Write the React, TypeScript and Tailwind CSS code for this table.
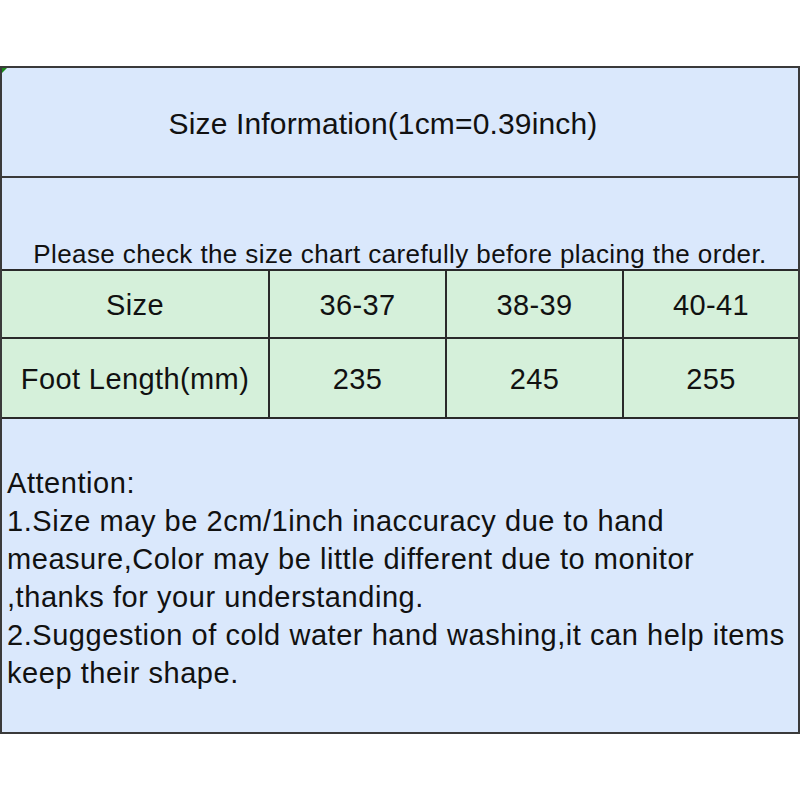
import React from 'react'

const sizes = ['36-37', '38-39', '40-41']
const lengths = ['235', '245', '255']

const notes = [
  'Attention:',
  '1.Size may be 2cm/1inch inaccuracy due to hand',
  'measure,Color may be little different due to monitor',
  ',thanks for your understanding.',
  '2.Suggestion of cold water hand washing,it can help items',
  'keep their shape.',
]

export default function App() {
  return (
    <div className="w-[800px] h-[800px] bg-white pt-[66px] text-[#111] font-['Liberation_Sans',Arial,sans-serif]">
      <div className="relative w-[800px] h-[668px] border-2 border-[#3a3a3a] bg-[#dae8fc] flex flex-col">
        {/* little green corner marker */}
        <div className="absolute left-0 top-0 w-0 h-0 border-t-[5px] border-r-[5px] border-t-[#1a8a1a] border-r-transparent" />

        <div className="h-[110px] border-b-2 border-[#3a3a3a] flex items-center justify-center pr-[34px] pt-[4px] text-[30px] leading-none tracking-[0.15px]">
          Size Information(1cm=0.39inch)
        </div>

        <div className="h-[91px] flex items-end justify-center text-[26px] leading-[30px] tracking-[0.4px]">
          Please check the size chart carefully before placing the order.
        </div>

        <div className="grid grid-cols-[268px_177px_177px_1fr] bg-[#d5f0da] border-t-2 border-[#2a2a2a] text-[29px] tracking-[0.4px]">
          <div className="h-[68px] pt-[3px] border-b-2 border-r-2 border-[#2a2a2a] flex items-center justify-center">Size</div>
          {sizes.map((s, i) => (
            <div
              key={s}
              className={
                'h-[68px] pt-[3px] border-b-2 border-[#2a2a2a] flex items-center justify-center' +
                (i < 2 ? ' border-r-2' : '')
              }
            >
              {s}
            </div>
          ))}
          <div className="h-[80px] pt-[3px] border-b-2 border-r-2 border-[#2a2a2a] flex items-center justify-center">Foot Length(mm)</div>
          {lengths.map((l, i) => (
            <div
              key={l}
              className={
                'h-[80px] pt-[3px] border-b-2 border-[#2a2a2a] flex items-center justify-center' +
                (i < 2 ? ' border-r-2' : '')
              }
            >
              {l}
            </div>
          ))}
        </div>

        <div className="flex-1 pl-[5px] pt-[45px] text-[29px] leading-[38px] tracking-[0.55px]">
          {notes.map((n) => (
            <div key={n} className="whitespace-nowrap">{n}</div>
          ))}
        </div>
      </div>
    </div>
  )
}
